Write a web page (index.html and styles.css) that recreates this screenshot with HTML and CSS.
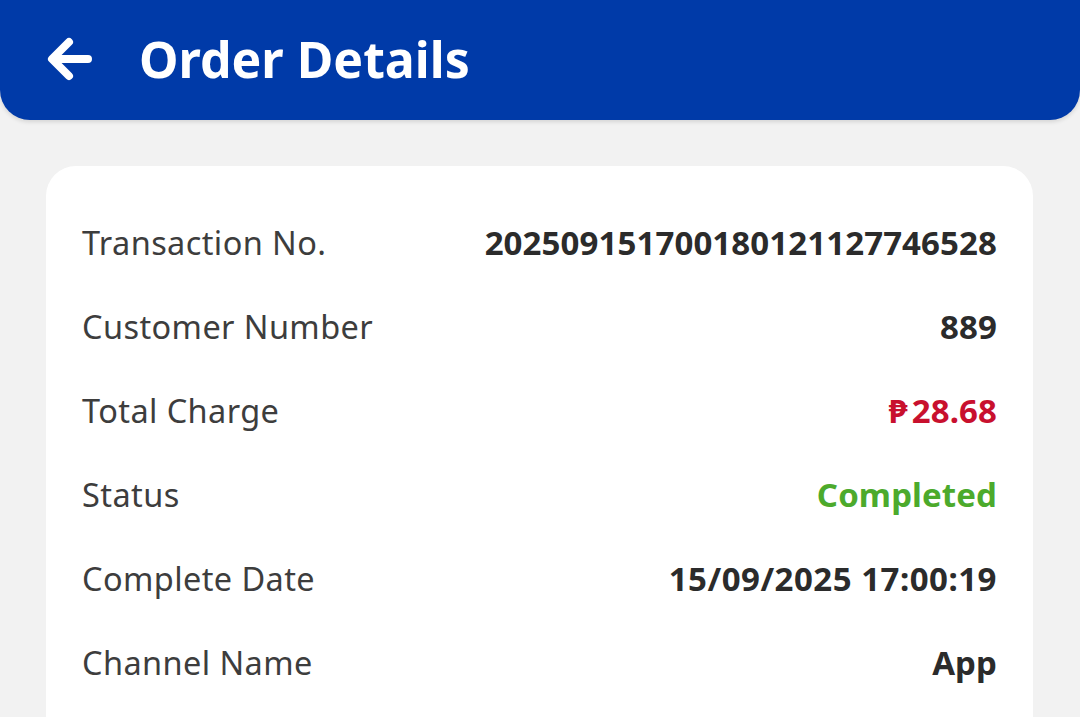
FILE: index.html
```html
<!DOCTYPE html>
<html>
<head>
<meta charset="utf-8">
<link rel="stylesheet" href="styles.css">
</head>
<body>
<header class="topbar">
  <svg class="back" viewBox="0 0 46 44" width="46" height="44">
    <path d="M22 5 L5 22 L22 39 M6 22 H41" fill="none" stroke="#fff" stroke-width="8" stroke-linecap="round" stroke-linejoin="round"/>
  </svg>
  <h1 class="title">Order Details</h1>
</header>
<main class="card">
  <div class="row"><span class="label">Transaction No.</span><span class="value">202509151700180121127746528</span></div>
  <div class="row"><span class="label">Customer Number</span><span class="value">889</span></div>
  <div class="row"><span class="label">Total Charge</span><span class="value red"><span class="peso">₱</span>28.68</span></div>
  <div class="row"><span class="label">Status</span><span class="value green">Completed</span></div>
  <div class="row"><span class="label">Complete Date</span><span class="value date">15/09/2025 17:00:19</span></div>
  <div class="row"><span class="label">Channel Name</span><span class="value">App</span></div>
</main>
</body>
</html>
```
FILE: styles.css
```css
html, body {
  margin: 0;
  padding: 0;
}
body {
  background: #f2f2f2;
  font-family: "Noto Sans", "DejaVu Sans", sans-serif;
  width: 1080px;
  height: 717px;
  overflow: hidden;
}
.topbar {
  height: 120px;
  background: #003aa8;
  border-radius: 0 0 30px 30px;
  display: flex;
  align-items: center;
  box-sizing: border-box;
  padding-left: 47px;
  box-shadow: 0 2px 4px rgba(0,0,0,0.12);
}
.back {
  display: block;
  margin-top: -2px;
}
.title {
  margin: -2px 0 0 46px;
  color: #fff;
  font-size: 50px;
  font-weight: 700;
  line-height: 1;
}
.card {
  margin: 46px 47px 0 46px;
  background: #fff;
  border-radius: 30px;
  padding: 34px 36px 0 36px;
  height: 640px;
  box-sizing: border-box;
}
.row {
  height: 84px;
  display: flex;
  align-items: center;
  justify-content: space-between;
}
.label {
  color: #3d3d3d;
  font-size: 32.5px;
  letter-spacing: 0.4px;
}
.value {
  color: #2b2b2b;
  font-size: 33px;
  font-weight: 700;
  letter-spacing: 0.1px;
}
.date {
  letter-spacing: 0.5px;
}
.peso {
  margin-right: 4px;
}
.red { color: #c8102e; }
.green { color: #4caa2c; }
```
